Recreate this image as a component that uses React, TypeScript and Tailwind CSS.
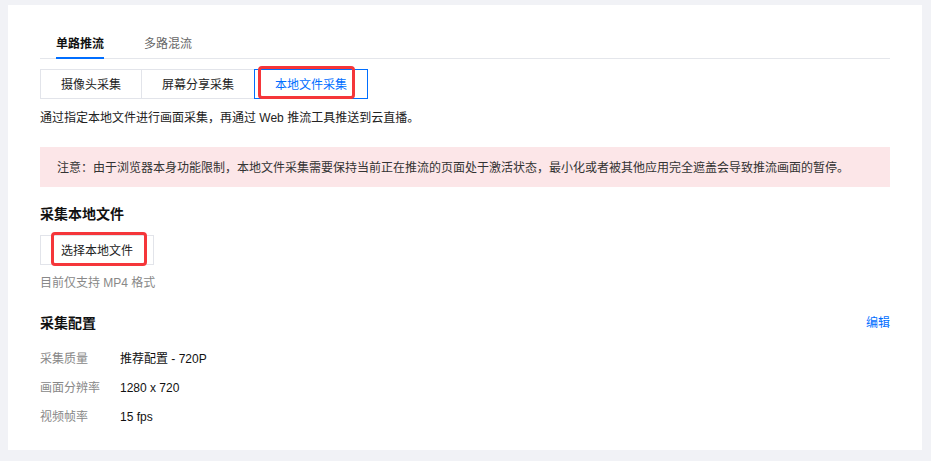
import { useState } from 'react';

type SubTab = { key: string; label: string; width: string };

const subTabs: SubTab[] = [
  { key: 'camera', label: '摄像头采集', width: 'w-[102px]' },
  { key: 'screen', label: '屏幕分享采集', width: 'w-[114px]' },
  { key: 'file', label: '本地文件采集', width: 'w-[114px]' },
];

const configRows = [
  { label: '采集质量', value: '推荐配置 - 720P' },
  { label: '画面分辨率', value: '1280 x 720' },
  { label: '视频帧率', value: '15 fps' },
];

// red outline used to point at a control
const Highlight = ({ className }: { className: string }) => (
  <div className={`pointer-events-none absolute rounded-[4px] border-[3px] border-[#f5363a] ${className}`} />
);

const App = () => {
  const [mainTab, setMainTab] = useState('single');
  const [subTab, setSubTab] = useState('file');

  return (
    <div
      className="min-h-[461px] bg-[#f1f2f6] pt-[5px] pl-[8px]"
      style={{ fontFamily: '"Liberation Sans", "Noto Sans CJK SC", sans-serif' }}
    >
      <div className="h-[445px] w-[914px] bg-white px-[32px] pt-[28px]">
        {/* main tabs */}
        <div className="flex border-b border-[#e4e6eb] pl-[16px]">
          {[
            { key: 'single', label: '单路推流' },
            { key: 'multi', label: '多路混流' },
          ].map((t) => (
            <button
              key={t.key}
              onClick={() => setMainTab(t.key)}
              className={`relative mr-[40px] h-[25px] pt-[1px] pb-[4px] text-[12px] leading-[20px] ${
                mainTab === t.key ? 'font-semibold text-[#111]' : 'text-[#666]'
              }`}
            >
              {t.label}
              {mainTab === t.key && <span className="absolute bottom-[-1px] left-0 h-[2px] w-full bg-[#006eff]" />}
            </button>
          ))}
        </div>

        {/* sub tabs */}
        <div className="mt-[10px] flex">
          {subTabs.map((t, i) => {
            const active = subTab === t.key;
            return (
              <div key={t.key} className={`relative ${i > 0 ? '-ml-px' : ''} ${active ? 'z-10' : ''}`}>
                <button
                  onClick={() => setSubTab(t.key)}
                  className={`h-[30px] ${t.width} border pt-[1px] text-[12px] ${
                    active ? 'border-[#006eff] text-[#006eff]' : 'border-[#e2e4ea] text-[#222]'
                  }`}
                >
                  {t.label}
                </button>
                {t.key === 'file' && <Highlight className="left-[4px] top-[-3px] h-[33px] w-[97px]" />}
              </div>
            );
          })}
        </div>

        <p className="mt-[9px] text-[12px] leading-[20px] text-[#222]">
          通过指定本地文件进行画面采集，再通过 Web 推流工具推送到云直播。
        </p>

        <div className="mt-[19px] flex h-[40px] items-center bg-[#fce6e8] px-[17px] pt-[1px] text-[12px] text-[#333]">
          注意：由于浏览器本身功能限制，本地文件采集需要保持当前正在推流的页面处于激活状态，最小化或者被其他应用完全遮盖会导致推流画面的暂停。
        </div>

        <h3 className="mt-[16px] text-[14px] font-bold leading-[22px] text-[#111]">采集本地文件</h3>

        <div className="relative mt-[10px] w-[114px]">
          <button className="h-[30px] w-[114px] border border-[#e2e4ea] pt-[1px] text-[12px] text-[#222]">选择本地文件</button>
          <Highlight className="left-[11px] top-[-3px] h-[34px] w-[96px]" />
        </div>

        <p className="mt-[8px] text-[12px] leading-[20px] text-[#888]">目前仅支持 MP4 格式</p>

        <div className="mt-[19px] flex items-center justify-between">
          <h3 className="text-[14px] font-bold leading-[22px] text-[#111]">采集配置</h3>
          <a href="#" className="text-[12px] text-[#006eff]">编辑</a>
        </div>

        <div className="mt-[15px] flex flex-col gap-[9px]">
          {configRows.map((r) => (
            <div key={r.label} className="flex text-[12px] leading-[20px]">
              <span className="w-[80px] text-[#888]">{r.label}</span>
              <span className="text-[#111]">{r.value}</span>
            </div>
          ))}
        </div>
      </div>
    </div>
  );
};

export default App;
